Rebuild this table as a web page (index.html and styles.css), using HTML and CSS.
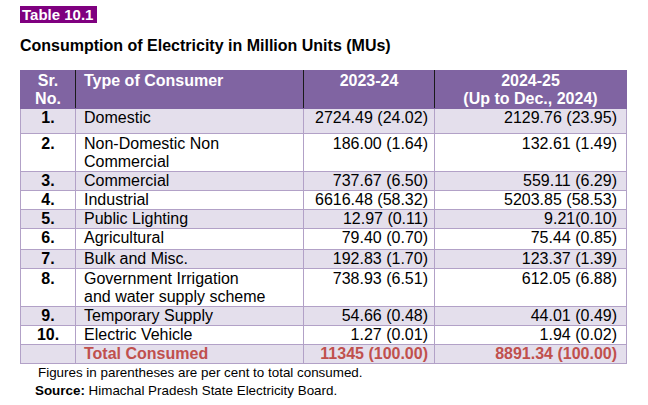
FILE: index.html
```html
<!DOCTYPE html>
<html>
<head>
<meta charset="utf-8">
<link rel="stylesheet" href="styles.css">
</head>
<body>
<div class="page">
  <div class="badge">Table 10.1</div>
  <h1 class="title">Consumption of Electricity in Million Units (MUs)</h1>
  <table class="tbl">
    <colgroup>
      <col class="c1"><col class="c2"><col class="c3"><col class="c4">
    </colgroup>
    <thead>
      <tr class="head">
        <th class="sr">Sr.<br>No.</th>
        <th class="type">Type of Consumer</th>
        <th class="yr">2023-24</th>
        <th class="yr last">2024-25<br>(Up to Dec., 2024)</th>
      </tr>
    </thead>
    <tbody>
      <tr class="alt r1"><td class="sr">1.</td><td class="type">Domestic</td><td class="n3">2724.49 (24.02)</td><td class="n4">2129.76 (23.95)</td></tr>
      <tr class="tall"><td class="sr">2.</td><td class="type">Non-Domestic Non<br>Commercial</td><td class="n3">186.00 (1.64)</td><td class="n4">132.61 (1.49)</td></tr>
      <tr class="alt"><td class="sr">3.</td><td class="type">Commercial</td><td class="n3">737.67 (6.50)</td><td class="n4">559.11 (6.29)</td></tr>
      <tr class="short"><td class="sr">4.</td><td class="type">Industrial</td><td class="n3">6616.48 (58.32)</td><td class="n4">5203.85 (58.53)</td></tr>
      <tr class="alt"><td class="sr">5.</td><td class="type">Public Lighting</td><td class="n3">12.97 (0.11)</td><td class="n4">9.21(0.10)</td></tr>
      <tr class="r6"><td class="sr">6.</td><td class="type">Agricultural</td><td class="n3">79.40 (0.70)</td><td class="n4">75.44 (0.85)</td></tr>
      <tr class="alt"><td class="sr">7.</td><td class="type">Bulk and Misc.</td><td class="n3">192.83 (1.70)</td><td class="n4">123.37 (1.39)</td></tr>
      <tr class="tall"><td class="sr">8.</td><td class="type">Government Irrigation<br>and water supply scheme</td><td class="n3">738.93 (6.51)</td><td class="n4">612.05 (6.88)</td></tr>
      <tr class="alt"><td class="sr">9.</td><td class="type">Temporary Supply</td><td class="n3">54.66 (0.48)</td><td class="n4">44.01 (0.49)</td></tr>
      <tr><td class="sr">10.</td><td class="type">Electric Vehicle</td><td class="n3">1.27 (0.01)</td><td class="n4">1.94 (0.02)</td></tr>
      <tr class="alt total"><td class="sr"></td><td class="type">Total Consumed</td><td class="n3">11345 (100.00)</td><td class="n4">8891.34 (100.00)</td></tr>
    </tbody>
  </table>
  <p class="note">Figures in parentheses are per cent to total consumed.</p>
  <p class="source"><b>Source:</b> Himachal Pradesh State Electricity Board.</p>
</div>
</body>
</html>
```

FILE: styles.css
```css
html, body {
  margin: 0;
  padding: 0;
  background: #ffffff;
}
body {
  font-family: "Liberation Sans", Arial, sans-serif;
  color: #000;
}
.page {
  padding: 6px 0 0 20px;
}
.badge {
  display: inline-block;
  box-sizing: border-box;
  background: #7f007f;
  color: #fff;
  font-weight: bold;
  font-size: 15px;
  line-height: 17px;
  height: 17px;
  width: 77px;
  padding: 0 0 0 2px;
  white-space: nowrap;
}
.title {
  margin: 13px 0 0 0;
  font-size: 16px;
  line-height: 18px;
  font-weight: bold;
}
.tbl {
  margin-top: 15px;
  border-collapse: collapse;
  table-layout: fixed;
  width: 606px;
  font-size: 16px;
}
.c1 { width: 55px; }
.c2 { width: 228px; }
.c3 { width: 131px; }
.c4 { width: 192px; }
.tbl th, .tbl td {
  padding: 0;
  line-height: 18px;
  vertical-align: top;
  border: 1px solid #b2a1c7;
  overflow: hidden;
  white-space: nowrap;
}
.head {
  height: 38px;
}
.head th {
  background: #8064a2;
  color: #fff;
  font-weight: bold;
  border-color: #8064a2;
  border-right: 1px solid #1a1a1a;
  padding-top: 1px;
}
.head th.last {
  border-right-color: #8064a2;
}
.head th.sr { text-align: center; }
.head th.type { text-align: left; padding-left: 8px; }
.head th.yr { text-align: center; }
tbody tr { height: 19px; }
tbody tr.r1 { height: 25px; }
tbody tr.tall { height: 37px; }
tbody tr.short { height: 18px; }
tbody tr.r6 { height: 21px; }
tbody tr.tall td { padding-top: 1px; }
tbody tr.alt td { background: #e4dfec; }
td.sr { text-align: center; font-weight: bold; }
td.type { text-align: left; padding-left: 8px; }
td.n3 { text-align: right; padding-right: 6px; }
td.n4 { text-align: right; padding-right: 9px; }
.total td {
  color: #c0504d;
  font-weight: bold;
}
.note {
  margin: 0 0 0 18px;
  font-size: 13.4px;
  line-height: 18px;
}
.source {
  margin: 0 0 0 15px;
  font-size: 13.4px;
  line-height: 18px;
}
```
